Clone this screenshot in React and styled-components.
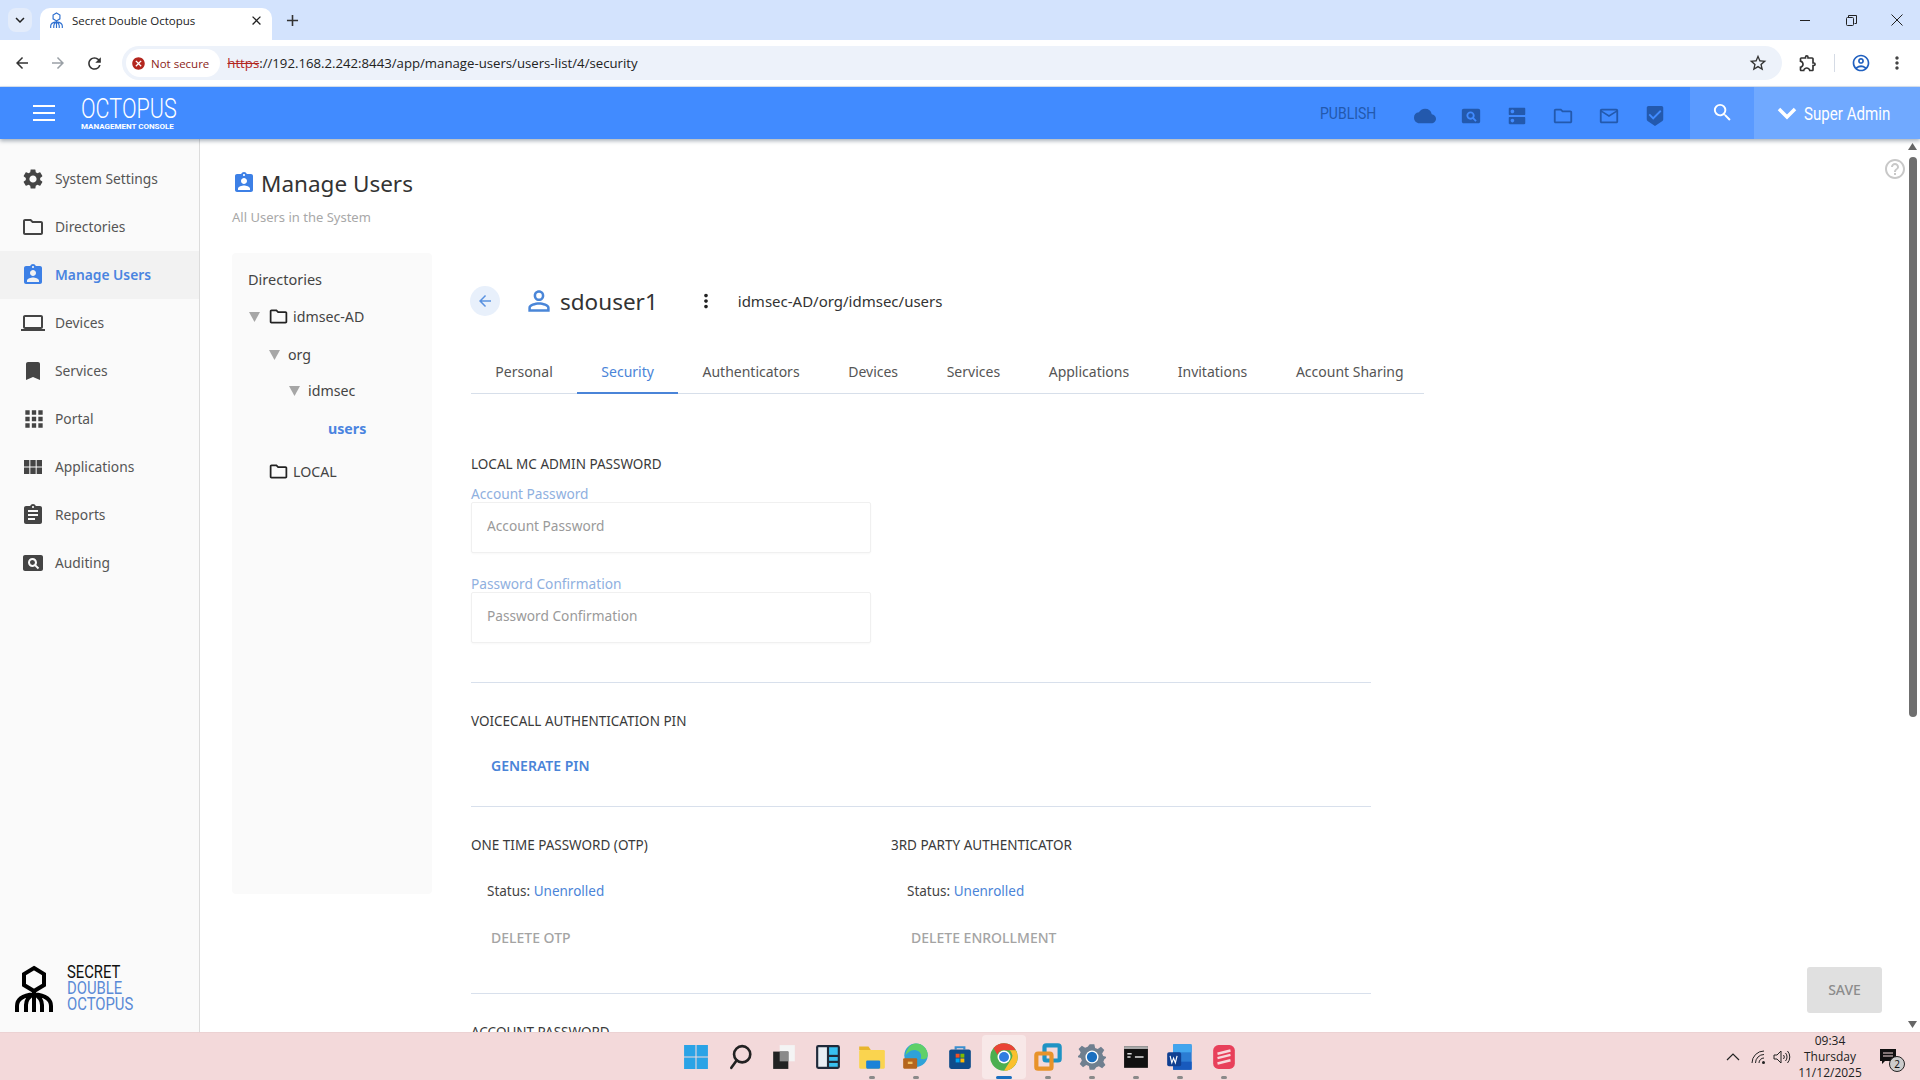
import React from "react";
import styled, { createGlobalStyle } from "styled-components";
import {
  MdSettings, MdOutlineFolder, MdAssignmentInd, MdLaptop, MdBookmark, MdApps, MdViewModule,
  MdAssignment, MdPageview, MdCloud, MdDns, MdMailOutline, MdBeenhere, MdSearch,
  MdKeyboardArrowDown, MdPersonOutline, MdArrowBack, MdMoreVert, MdHelpOutline, MdClose, MdAdd,
  MdRefresh, MdArrowForward, MdStarBorder, MdOutlineExtension, MdOutlineAccountCircle, MdCancel,
} from "react-icons/md";

const NAV = [
  ["System Settings", MdSettings],
  ["Directories", MdOutlineFolder],
  ["Manage Users", MdAssignmentInd],
  ["Devices", MdLaptop],
  ["Services", MdBookmark],
  ["Portal", MdApps],
  ["Applications", MdViewModule],
  ["Reports", MdAssignment],
  ["Auditing", MdPageview],
];
const TABS = ["Personal", "Security", "Authenticators", "Devices", "Services", "Applications", "Invitations", "Account Sharing"];
const HEADER_ICONS = [MdCloud, MdPageview, MdDns, MdOutlineFolder, MdMailOutline, MdBeenhere];

const OctopusMark = ({ size = 38, color = "#000", ...rest }) => (
  <svg width={size} height={size * 1.24} viewBox="0 0 38 47" fill="none" stroke={color} strokeWidth="4" {...rest}>
    <polygon points="19,3 29,9 29,20 19,26 9,20 9,9" />
    <path d="M19 26V47M2 47V41Q2 31 19 29Q36 31 36 41V47M11 47V40Q11 33 19 29Q27 33 27 40V47" />
  </svg>
);

const TASK_ICONS = [
  <svg width="26" height="26" viewBox="0 0 24 24" key="win">
    <path fill="#2aa3e6" d="M1 1h10.5v10.5H1zM12.5 1H23v10.5H12.5zM1 12.5h10.5V23H1zM12.5 12.5H23V23H12.5z" />
  </svg>,
  <svg width="26" height="26" viewBox="0 0 24 24" fill="none" stroke="#222" strokeWidth="2.4" key="search">
    <circle cx="14" cy="9.5" r="7.5" /><path d="M9 15l-5 7" strokeLinecap="round" />
  </svg>,
  <svg width="26" height="26" viewBox="0 0 24 24" key="tasks">
    <rect x="8" y="1" width="14" height="15" fill="#f4f4f4" /><rect x="2" y="7" width="14" height="16" fill="#222" />
    <rect x="8" y="7" width="8" height="9" fill="#8a8a8a" />
  </svg>,
  <svg width="26" height="26" viewBox="0 0 24 24" key="widgets">
    <rect x="1" y="1" width="22" height="22" rx="2" fill="#1f2a3a" /><rect x="3" y="3" width="8" height="18" fill="#e8eef4" />
    <rect x="13" y="3" width="8" height="7" fill="#38c0f0" /><rect x="13" y="12" width="8" height="3.5" fill="#38c0f0" />
    <rect x="13" y="17.5" width="8" height="3.5" fill="#38c0f0" />
  </svg>,
  <svg width="28" height="28" viewBox="0 0 24 24" key="files">
    <path fill="#e8b52c" d="M1 3h8l2 3H1z" /><rect x="1" y="6" width="22" height="16" rx="1" fill="#fad44f" />
    <rect x="7" y="15" width="12" height="7" rx="1" fill="#1a82d8" />
  </svg>,
  <svg width="28" height="28" viewBox="0 0 24 24" key="edge">
    <circle cx="12" cy="10.5" r="10" fill="#2ea2d8" /><path fill="#5fd068" d="M12 .5a10 10 0 0 1 10 10c0 3-3 4-6 3 2-5-3-9-8-7-2 1-4 3-5 4C4 5 7 .5 12 .5z" />
    <rect x="1" y="13" width="12" height="9" rx="1" fill="#b5651d" /><rect x="5" y="16" width="4" height="2" fill="#f0c060" />
  </svg>,
  <svg width="26" height="26" viewBox="0 0 24 24" key="store">
    <path d="M8 5V3h8v2" stroke="#3a8fd0" strokeWidth="2" fill="none" /><rect x="2" y="5" width="20" height="18" rx="2" fill="#0f4c8a" />
    <rect x="8" y="9" width="3.6" height="3.6" fill="#f25022" /><rect x="12.4" y="9" width="3.6" height="3.6" fill="#7fba00" />
    <rect x="8" y="13.4" width="3.6" height="3.6" fill="#00a4ef" /><rect x="12.4" y="13.4" width="3.6" height="3.6" fill="#ffb900" />
  </svg>,
  <svg width="30" height="30" viewBox="0 0 24 24" key="chrome">
    <circle cx="12" cy="12" r="11" fill="#4caf50" /><path fill="#ea4335" d="M12 1a11 11 0 0 1 9.500 5.500H12a5.500 5.500 0 0 0-5.200 3.600L3.600 5A11 11 0 0 1 12 1z" />
    <path fill="#fbc02d" d="M21.500 6.500A11 11 0 0 1 12 23l5-8a5.500 5.500 0 0 0-.6-8.500z" /><circle cx="12" cy="12" r="5.200" fill="#fff" /><circle cx="12" cy="12" r="4" fill="#2f7de1" />
  </svg>,
  <svg width="28" height="28" viewBox="0 0 24 24" fill="none" strokeWidth="3.600" key="vm">
    <rect x="9" y="2" width="13" height="13" rx="1.500" stroke="#1f93c4" /><rect x="2" y="9" width="13" height="13" rx="1.500" stroke="#e8932a" />
  </svg>,
  <svg width="28" height="28" viewBox="0 0 24 24" key="gear">
    <path fill="#6f7f8f" d="M10 1h4l.7 3.200 2.200.9 2.800-1.800 2.800 2.800-1.800 2.800.9 2.200L25 12l-2.400 1.900-.9 2.200 1.800 2.800-2.800 2.800-2.800-1.800-2.200.9L14 23h-4l-.7-3.200-2.200-.9-2.800 1.800-2.800-2.800 1.800-2.800-.9-2.200L-1 12l2.400-1.900.9-2.200-1.800-2.800 2.800-2.800 2.800 1.800 2.200-.9z" />
    <circle cx="12" cy="12" r="5.600" fill="#fff" /><circle cx="12" cy="12" r="4.400" fill="#1a6fc0" />
  </svg>,
  <svg width="26" height="26" viewBox="0 0 24 24" key="term">
    <rect x="1" y="2" width="22" height="20" fill="#111" /><rect x="1" y="2" width="22" height="2.600" fill="#aaa" />
    <path d="M4 9h4M4 12h3M11 12h8" stroke="#ddd" strokeWidth="1.400" />
  </svg>,
  <svg width="28" height="28" viewBox="0 0 24 24" key="word">
    <rect x="6" y="1" width="16" height="22" rx="1.500" fill="#2b7cd3" /><rect x="6" y="1" width="16" height="7" fill="#41a5ee" />
    <rect x="6" y="16" width="16" height="7" fill="#185abd" /><rect x="1" y="8" width="12" height="12" rx="1.500" fill="#103f91" />
    <path d="M3.500 11l1.500 6 1.500-4 1.500 4 1.500-6" stroke="#fff" strokeWidth="1" fill="none" />
  </svg>,
  <svg width="26" height="28" viewBox="0 0 24 24" key="app">
    <rect x="2" y="1" width="20" height="22" rx="5" fill="#e8405a" />
    <path d="M6 9l12-3M6 13l12-3M6 18l12-3" stroke="#f8d8dc" strokeWidth="2.200" />
  </svg>,
];

const App = () => {
  return (
    <>
      <GlobalStyle />
      <Frame>
        <TabStrip>
          <TabListButton><MdKeyboardArrowDown size={18} /></TabListButton>
          <BrowserTab>
            <OctopusMark size={13} color="#2d6fd0" strokeWidth="3.400" />
            <BrowserTabTitle>Secret Double Octopus</BrowserTabTitle>
            <MdClose size={15} />
          </BrowserTab>
          <NewTab><MdAdd size={19} /></NewTab>
          <WindowControls>
            <WinButton>
              <svg width="11" height="11" viewBox="0 0 11 11" stroke="#222" fill="none"><path d="M0 5.500h10" /></svg>
            </WinButton>
            <WinButton>
              <svg width="11" height="11" viewBox="0 0 11 11" stroke="#222" fill="none"><rect x="0.500" y="2.500" width="7" height="8" rx="1" /><path d="M2.500 2.500v-2h8v8h-2" /></svg>
            </WinButton>
            <WinButton>
              <svg width="12" height="12" viewBox="0 0 12 12" stroke="#222" fill="none"><path d="M.5.5l11 11M11.500.5l-11 11" /></svg>
            </WinButton>
          </WindowControls>
        </TabStrip>

        <Toolbar>
          <ToolButton><MdArrowBack size={18} /></ToolButton>
          <ToolButton $off><MdArrowForward size={18} /></ToolButton>
          <ToolButton><MdRefresh size={19} /></ToolButton>
          <Omnibox>
            <NotSecure><MdCancel size={15} color="#b3261e" />Not secure</NotSecure>
            <Url><Struck>https</Struck>://192.168.2.242:8443/app/manage-users/users-list/4/security</Url>
            <Star><MdStarBorder size={20} /></Star>
          </Omnibox>
          <ToolRight>
            <MdOutlineExtension size={20} color="#333" />
            <ToolSep />
            <MdOutlineAccountCircle size={20} color="#1f5fbf" />
            <MdMoreVert size={20} color="#444" />
          </ToolRight>
        </Toolbar>

        <AppHeader>
          <Burger><span /><span /><span /></Burger>
          <Brand>
            <BrandName>OCTOPUS</BrandName>
            <BrandSub>MANAGEMENT CONSOLE</BrandSub>
          </Brand>
          <Publish>PUBLISH</Publish>
          <HeaderIcons>
            {HEADER_ICONS.map((Icon, i) => <Icon key={i} size={22} />)}
          </HeaderIcons>
          <HeaderSearch><MdSearch size={23} /></HeaderSearch>
          <UserMenu>
            <svg width="20" height="14" viewBox="0 0 20 14" fill="none" stroke="#fff" strokeWidth="3.500"><path d="M2 3l8 8 8-8" /></svg>
            <UserMenuName>Super Admin</UserMenuName>
          </UserMenu>
        </AppHeader>

        <Body>
          <Sidebar>
            <nav>
              {NAV.map(([label, Icon]) => (
                <NavItem key={label} $active={label === "Manage Users"}>
                  <NavIcon><Icon size={label === "Portal" ? 26 : 24} /></NavIcon>
                  <NavLabel>{label}</NavLabel>
                </NavItem>
              ))}
            </nav>
            <SideLogo>
              <OctopusMark />
              <SideLogoText>
                <span>SECRET</span>
                <em>DOUBLE</em>
                <em>OCTOPUS</em>
              </SideLogoText>
            </SideLogo>
          </Sidebar>

          <Main>
            <TitleRow>
              <MdAssignmentInd size={24} color="#3d80e6" />
              <Title>Manage Users</Title>
            </TitleRow>
            <Subtitle>All Users in the System</Subtitle>

            <Columns>
              <TreePanel>
                <TreeHead>Directories</TreeHead>
                <TreeRow $depth={0} $top={17}><Caret /><TreeFolder size={21} color="#222" />idmsec-AD</TreeRow>
                <TreeRow $depth={1} $top={18}><Caret />org</TreeRow>
                <TreeRow $depth={2} $top={16}><Caret />idmsec</TreeRow>
                <TreeRow $depth={4} $top={18} $active>users</TreeRow>
                <TreeRow $depth={0} $top={23}><CaretGap /><TreeFolder size={21} color="#222" />LOCAL</TreeRow>
              </TreePanel>

              <Detail>
                <UserRow>
                  <BackButton><MdArrowBack size={18} /></BackButton>
                  <MdPersonOutline size={32} color="#4a86d8" />
                  <UserName>sdouser1</UserName>
                  <MdMoreVert size={22} color="#222" />
                  <UserPath>idmsec-AD/org/idmsec/users</UserPath>
                </UserRow>

                <TabBar>
                  {TABS.map((t) => <Tab key={t} $active={t === "Security"}>{t}</Tab>)}
                </TabBar>

                <SectionHead $top={60}>LOCAL MC ADMIN PASSWORD</SectionHead>
                <FieldLabel $top={11}>Account Password</FieldLabel>
                <TextInput placeholder="Account Password" />
                <FieldLabel $top={22}>Password Confirmation</FieldLabel>
                <TextInput placeholder="Password Confirmation" />
                <Divider $top={39} />

                <SectionHead $top={28}>VOICECALL AUTHENTICATION PIN</SectionHead>
                <LinkButton>GENERATE PIN</LinkButton>
                <Divider $top={22} />

                <TwoCols>
                  <div>
                    <SectionHead $top={28}>ONE TIME PASSWORD (OTP)</SectionHead>
                    <StatusLine>Status: <b>Unenrolled</b></StatusLine>
                    <MutedButton>DELETE OTP</MutedButton>
                  </div>
                  <div>
                    <SectionHead $top={28}>3RD PARTY AUTHENTICATOR</SectionHead>
                    <StatusLine>Status: <b>Unenrolled</b></StatusLine>
                    <MutedButton>DELETE ENROLLMENT</MutedButton>
                  </div>
                </TwoCols>
                <Divider $top={37} />
                <SectionHead $top={28}>ACCOUNT PASSWORD</SectionHead>
              </Detail>
            </Columns>

            <HelpIcon><MdHelpOutline size={24} /></HelpIcon>
            <SaveButton>SAVE</SaveButton>
          </Main>

          <ScrollBar>
            <ScrollArrow />
            <ScrollTrack><ScrollThumb /></ScrollTrack>
            <ScrollArrow $down />
          </ScrollBar>
        </Body>

        <Taskbar>
          <TaskIcons>
            {TASK_ICONS.map((icon, i) => (
              <TaskIcon key={i} $open={[4, 5, 8, 9, 10, 11, 12].includes(i)} $active={i === 7}>{icon}</TaskIcon>
            ))}
          </TaskIcons>
          <Tray>
            <TrayChevron width="14" height="8" viewBox="0 0 14 8" fill="none" stroke="#222" strokeWidth="1.200"><path d="M1 7l6-6 6 6" /></TrayChevron>
            <svg width="16" height="14" viewBox="0 0 16 14" fill="none" stroke="#222"><path d="M1 13A12 12 0 0 1 13 1M4.500 13A8.500 8.500 0 0 1 13 4.500M8 13a5 5 0 0 1 5-5" /><circle cx="12.500" cy="12.500" r="1.500" fill="#222" stroke="none" /></svg>
            <svg width="18" height="14" viewBox="0 0 18 14" fill="none" stroke="#222"><path d="M1 5h3l4-4v12L4 9H1zM10.500 5a3 3 0 0 1 0 4M12.500 3a6 6 0 0 1 0 8M14.500 1a9 9 0 0 1 0 12" /></svg>
            <Clock><span>09:34</span><span>Thursday</span><span>11/12/2025</span></Clock>
            <Notify>
              <svg width="18" height="18" viewBox="0 0 18 18"><path fill="#111" d="M1 1h16v12H6l-3 3v-3H1z" /><path stroke="#f3d9da" d="M4 5h10M4 8h10" /></svg>
              <NotifyBadge>2</NotifyBadge>
            </Notify>
          </Tray>
        </Taskbar>
      </Frame>
    </>
  );
};

const GlobalStyle = createGlobalStyle`
  html, body { margin: 0; padding: 0; height: 100%; overflow: hidden; }
  body { font-family: "Noto Sans", "Liberation Sans", sans-serif; background: #fff; color: #333; }
  * { box-sizing: border-box; }
`;
const Frame = styled.div`
  width: 1920px;
  height: 1080px;
  display: flex;
  flex-direction: column;
  overflow: hidden;
`;
const TabStrip = styled.div`
  height: 40px;
  flex: none;
  background: #d3e3fd;
  display: flex;
  align-items: flex-end;
  padding-left: 8px;
`;
const TabListButton = styled.div`
  width: 24px;
  height: 24px;
  margin-bottom: 8px;
  border-radius: 8px;
  background: #e3ecfb;
  display: flex;
  align-items: center;
  justify-content: center;
  color: #222;
`;
const BrowserTab = styled.div`
  width: 232px;
  height: 32px;
  margin-left: 8px;
  padding: 0 8px 8px 10px;
  background: #fff;
  border-radius: 10px 10px 0 0;
  display: flex;
  align-items: center;
  gap: 9px;
  color: #222;
`;
const BrowserTabTitle = styled.span`
  flex: 1;
  font-size: 11.5px;
  font-family: "Open Sans", sans-serif;
  color: #222;
`;
const NewTab = styled.div`
  width: 40px;
  height: 32px;
  padding-bottom: 8px;
  display: flex;
  align-items: center;
  justify-content: center;
  color: #333;
`;
const WindowControls = styled.div`
  margin-left: auto;
  height: 40px;
  display: flex;
`;
const WinButton = styled.div`
  width: 46px;
  display: flex;
  align-items: center;
  justify-content: center;
`;
const Toolbar = styled.div`
  height: 47px;
  flex: none;
  background: #fff;
  border-bottom: 1px solid #dbe4f2;
  display: flex;
  align-items: center;
  padding-left: 4px;
`;
const ToolButton = styled.div`
  width: 36px;
  display: flex;
  justify-content: center;
  color: ${(p) => (p.$off ? "#9aa0a6" : "#333")};
`;
const Omnibox = styled.div`
  margin-left: 10px;
  width: 1660px;
  height: 34px;
  border-radius: 17px;
  background: #edf2fa;
  display: flex;
  align-items: center;
  padding: 0 4px;
`;
const NotSecure = styled.div`
  height: 28px;
  padding: 0 11px 0 5px;
  border-radius: 14px;
  background: #fff;
  display: flex;
  align-items: center;
  gap: 5px;
  font-size: 11.5px;
  font-family: "Open Sans", sans-serif;
  color: #8c1d18;
`;
const Url = styled.div`
  margin-left: 7px;
  font-size: 13.2px;
  font-family: "Open Sans", sans-serif;
  color: #222;
`;
const Struck = styled.span`
  color: #b3261e;
  text-decoration: line-through;
`;
const Star = styled.div`
  margin-left: auto;
  margin-right: 10px;
  display: flex;
  color: #333;
`;
const ToolRight = styled.div`
  margin-left: 16px;
  display: flex;
  align-items: center;
  gap: 16px;
`;
const ToolSep = styled.div`
  width: 1px;
  height: 18px;
  background: #d5dbe5;
`;
const AppHeader = styled.header`
  height: 52px;
  flex: none;
  position: relative;
  z-index: 2;
  background: #418bff;
  box-shadow: 0 2px 4px rgba(40, 60, 80, 0.4);
  display: flex;
  align-items: center;
`;
const Burger = styled.div`
  margin-left: 33px;
  width: 22px;
  display: flex;
  flex-direction: column;
  gap: 5px;
  span { height: 2px; background: #fff; }
`;
const Brand = styled.div`
  margin-left: 26px;
  color: #fff;
  display: flex;
  flex-direction: column;
  align-items: flex-start;
`;
const BrandName = styled.div`
  font-family: "Roboto", sans-serif;
  font-weight: 300;
  font-size: 28px;
  line-height: 28px;
  transform: scaleX(0.77);
  transform-origin: left center;
  width: 95px;
`;
const BrandSub = styled.div`
  font-family: "Roboto", sans-serif;
  font-weight: 700;
  font-size: 8px;
  line-height: 9px;
  margin-top: -1px;
`;
const Publish = styled.div`
  margin-left: auto;
  font-family: "Roboto", sans-serif;
  font-size: 16px;
  color: #2359ad;
  transform: scaleX(0.875);
  transform-origin: right center;
`;
const HeaderIcons = styled.div`
  margin-left: 38px;
  display: flex;
  gap: 24px;
  color: #2359ad;
  margin-top: 5px;
`;
const HeaderSearch = styled.div`
  margin-left: 24px;
  width: 64px;
  height: 100%;
  background: #5a9aff;
  color: #fff;
  display: flex;
  align-items: center;
  justify-content: center;
  padding-bottom: 2px;
`;
const UserMenu = styled.div`
  width: 166px;
  height: 100%;
  background: #70a9ff;
  color: #fff;
  display: flex;
  align-items: center;
  gap: 7px;
  padding-left: 23px;
`;
const UserMenuName = styled.span`
  font-family: "Roboto", sans-serif;
  font-size: 18px;
  white-space: nowrap;
  transform: scaleX(0.84);
  transform-origin: left center;
`;
const Body = styled.div`
  flex: 1;
  min-height: 0;
  display: flex;
`;
const Sidebar = styled.aside`
  width: 200px;
  flex: none;
  background: #fafafa;
  border-right: 1px solid #dcdcdc;
  padding-top: 16px;
  display: flex;
  flex-direction: column;
  justify-content: space-between;
`;
const NavItem = styled.div`
  height: 48px;
  display: flex;
  align-items: center;
  font-size: 13.8px;
  font-weight: ${(p) => (p.$active ? 600 : 400)};
  color: ${(p) => (p.$active ? "#4a84e0" : "#555")};
  background: ${(p) => (p.$active ? "#f2f2f2" : "transparent")};
  svg { color: ${(p) => (p.$active ? "#3d80e6" : "#444")}; }
`;
const NavLabel = styled.span`
  margin-top: -2px;
`;
const NavIcon = styled.div`
  width: 55px;
  padding-left: 21px;
  display: flex;
  margin-top: -1px;
`;
const SideLogo = styled.div`
  padding: 0 0 20px 15px;
  display: flex;
  align-items: flex-end;
  gap: 14px;
`;
const SideLogoText = styled.div`
  display: flex;
  flex-direction: column;
  font-family: "Roboto", sans-serif;
  font-size: 19px;
  line-height: 16px;
  color: #111;
  transform: scaleX(0.78);
  transform-origin: left center;
  em { font-style: normal; color: #5a8ad6; }
`;
const Main = styled.main`
  flex: 1;
  min-width: 0;
  position: relative;
  overflow: hidden;
  padding: 28px 0 0 32px;
`;
const TitleRow = styled.div`
  height: 32px;
  display: flex;
  align-items: center;
  gap: 5px;
`;
const Title = styled.h1`
  margin: 0;
  font-size: 22.5px;
  font-weight: 400;
  color: #333;
`;
const Subtitle = styled.div`
  margin-top: 8px;
  font-size: 13px;
  line-height: 20px;
  color: #a8a8a8;
`;
const Columns = styled.div`
  margin-top: 26px;
  display: flex;
  align-items: flex-start;
`;
const TreePanel = styled.div`
  width: 200px;
  height: 641px;
  flex: none;
  background: #fafafa;
  border-radius: 4px;
  padding: 16px 16px 0;
`;
const TreeHead = styled.div`
  font-size: 14.5px;
  line-height: 20px;
  color: #444;
`;
const TreeRow = styled.div`
  margin-top: ${(p) => p.$top}px;
  padding-left: ${(p) => p.$depth * 20}px;
  display: flex;
  align-items: center;
  gap: 8px;
  height: 20px;
  font-size: 14.2px;
  font-weight: ${(p) => (p.$active ? 700 : 400)};
  color: ${(p) => (p.$active ? "#4a84e0" : "#444")};
`;
const TreeFolder = styled(MdOutlineFolder)`
  margin-right: -4px;
`;
const Caret = styled.i`
  width: 11px;
  height: 10px;
  margin: 2px 0 0 1px;
  flex: none;
  background: #a6a6a6;
  clip-path: polygon(0 0, 100% 0, 50% 100%);
`;
const CaretGap = styled.i`
  width: 11px;
  margin-left: 1px;
  flex: none;
`;
const Detail = styled.div`
  margin-left: 39px;
  padding-top: 33px;
  width: 953px;
`;
const UserRow = styled.div`
  height: 30px;
  display: flex;
  align-items: center;
`;
const BackButton = styled.div`
  width: 30px;
  height: 30px;
  margin-left: -1px;
  border-radius: 50%;
  background: #e8f0fb;
  color: #5a92e0;
  display: flex;
  align-items: center;
  justify-content: center;
  margin-right: 23px;
`;
const UserName = styled.div`
  margin: 0 37px 0 5px;
  font-size: 22.5px;
  color: #333;
`;
const UserPath = styled.div`
  margin-left: 21px;
  font-size: 15px;
  color: #333;
`;
const TabBar = styled.div`
  margin-top: 34px;
  display: flex;
  height: 44px;
  border-bottom: 1px solid #d7dfea;
`;
const Tab = styled.div`
  flex: none;
  padding: 0 24.3px;
  height: 44px;
  display: flex;
  align-items: center;
  white-space: nowrap;
  font-size: 14px;
  color: ${(p) => (p.$active ? "#4a84d8" : "#555")};
  border-bottom: 2px solid ${(p) => (p.$active ? "#4a84d8" : "transparent")};
`;
const SectionHead = styled.div`
  margin-top: ${(p) => p.$top}px;
  font-size: 13.5px;
  line-height: 20px;
  color: #3a3a3a;
  white-space: nowrap;
`;
const FieldLabel = styled.div`
  margin-top: ${(p) => p.$top}px;
  font-size: 13.7px;
  line-height: 17px;
  color: #8fb0e0;
`;
const TextInput = styled.input`
  display: block;
  width: 400px;
  height: 51px;
  padding: 0 15px 4px;
  border: 1px solid #f0f0f0;
  border-radius: 2px;
  box-shadow: 0 1px 2px rgba(0, 0, 0, 0.03);
  font-family: inherit;
  font-size: 13.7px;
  outline: none;
  &::placeholder { color: #9a9a9a; opacity: 1; }
`;
const Divider = styled.div`
  margin-top: ${(p) => p.$top}px;
  width: 900px;
  height: 1px;
  background: #d8e0ec;
`;
const LinkButton = styled.div`
  margin-top: 17px;
  height: 36px;
  padding: 0 0 2px 20px;
  display: flex;
  align-items: center;
  font-size: 14px;
  font-weight: 600;
  color: #4a84d8;
`;
const TwoCols = styled.div`
  display: grid;
  grid-template-columns: 420px 1fr;
  width: 900px;
`;
const StatusLine = styled.div`
  margin-top: 26px;
  padding-left: 16px;
  font-size: 13.5px;
  line-height: 20px;
  color: #444;
  b { font-weight: 400; color: #4a84d8; }
`;
const MutedButton = styled.div`
  margin-top: 19px;
  height: 36px;
  padding: 0 0 2px 20px;
  display: flex;
  align-items: center;
  font-size: 14px;
  font-weight: 500;
  color: #a4a4a4;
`;
const HelpIcon = styled.div`
  position: absolute;
  right: -2px;
  top: 18px;
  display: flex;
  color: #c8c8c8;
`;
const SaveButton = styled.div`
  position: absolute;
  left: 1607px;
  top: 828px;
  width: 75px;
  height: 46px;
  padding-bottom: 2px;
  border-radius: 3px;
  background: #e0e0e0;
  color: #8c8c8c;
  font-size: 14px;
  font-weight: 500;
  display: flex;
  align-items: center;
  justify-content: center;
`;
const ScrollBar = styled.div`
  width: 15px;
  flex: none;
  display: flex;
  flex-direction: column;
  align-items: center;
  padding: 4px 0;
`;
const ScrollArrow = styled.i`
  flex: none;
  width: 9px;
  height: 7px;
  background: #666;
  clip-path: ${(p) => (p.$down ? "polygon(0 0, 100% 0, 50% 100%)" : "polygon(50% 0, 100% 100%, 0 100%)")};
`;
const ScrollTrack = styled.div`
  flex: 1;
  width: 100%;
  padding-top: 7px;
  display: flex;
  justify-content: center;
`;
const ScrollThumb = styled.div`
  width: 8px;
  height: 560px;
  border-radius: 4px;
  background: #6f6f6f;
`;
const Taskbar = styled.footer`
  height: 48px;
  flex: none;
  position: relative;
  background: #f3d9da;
  border-top: 1px solid #ecd2d3;
  display: flex;
  justify-content: center;
`;
const TaskIcons = styled.div`
  display: flex;
  align-items: center;
`;
const TaskIcon = styled.div`
  width: 44px;
  height: 44px;
  position: relative;
  border-radius: 4px;
  display: flex;
  align-items: center;
  justify-content: center;
  background: ${(p) => (p.$active ? "#f8e8e8" : "transparent")};
  &::after {
    content: "";
    display: ${(p) => (p.$open || p.$active ? "block" : "none")};
    position: absolute;
    bottom: 0;
    left: 50%;
    width: ${(p) => (p.$active ? 16 : 6)}px;
    height: 3px;
    margin-left: ${(p) => (p.$active ? -8 : -3)}px;
    border-radius: 2px;
    background: ${(p) => (p.$active ? "#1a6fc0" : "#8a8a8a")};
  }
`;
const Tray = styled.div`
  position: absolute;
  right: 0;
  top: 0;
  bottom: 0;
  display: flex;
  align-items: center;
  gap: 6px;
  padding-right: 23px;
`;
const TrayChevron = styled.svg`
  margin-right: 5px;
`;
const Clock = styled.div`
  width: 70px;
  margin-left: -2px;
  display: flex;
  flex-direction: column;
  align-items: center;
  font-family: "Open Sans", sans-serif;
  font-size: 12px;
  line-height: 16px;
  color: #222;
`;
const Notify = styled.div`
  position: relative;
  margin-left: 8px;
  display: flex;
`;
const NotifyBadge = styled.span`
  position: absolute;
  right: -8px;
  bottom: -6px;
  width: 16px;
  height: 16px;
  border-radius: 50%;
  border: 1px solid #222;
  background: #ccc;
  font-size: 10px;
  display: flex;
  align-items: center;
  justify-content: center;
  color: #111;
`;

export default App;
